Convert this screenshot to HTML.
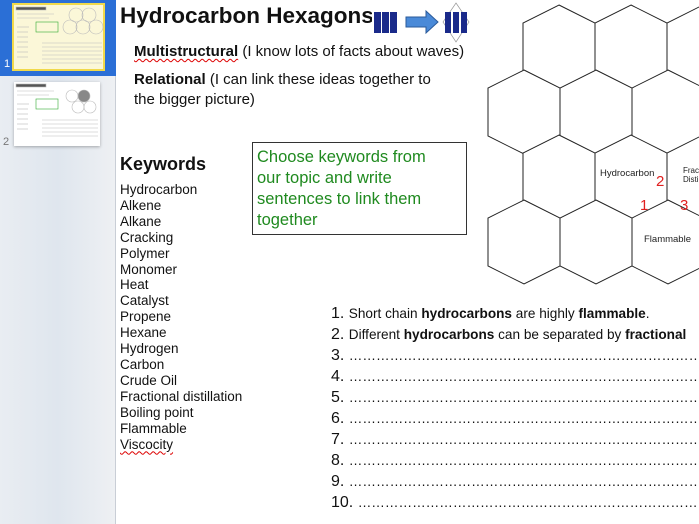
<!DOCTYPE html>
<html><head><meta charset="utf-8"><style>
*{margin:0;padding:0;box-sizing:border-box}
body{width:699px;height:524px;overflow:hidden;position:relative;background:#fff;font-family:"Liberation Sans",sans-serif;color:#111}
.a{position:absolute;white-space:nowrap}
#side{position:absolute;left:0;top:0;width:116px;height:524px;background:linear-gradient(90deg,#e9edf2,#dfe6ee 50%,#eef0f3);border-right:1px solid #c9ced6}
.kw{font-size:13.5px;line-height:15.9px}
.ln{font-size:13.6px}
.ln b{font-weight:bold}
.num{font-size:16px}
.sq{text-decoration:underline wavy #d00;text-decoration-thickness:1px;text-underline-offset:2px}
</style></head><body>
<div id="side">
  <div style="position:absolute;left:0;top:0;width:116px;height:76px;background:#2b6fd6"></div>
  <div style="position:absolute;left:12px;top:3px;width:93px;height:68px;background:#fbf7d8;border:2px solid #f1d94a"></div>
  <div style="position:absolute;left:14px;top:82px;width:86px;height:64px;background:#fff;box-shadow:0 1px 3px rgba(0,0,0,.3)"></div>
  <div class="a" style="left:4px;top:58px;font-size:11px;color:#fff">1</div>
  <div class="a" style="left:3px;top:136px;font-size:11px;color:#777">2</div>
  <svg style="position:absolute;left:14px;top:5px" width="90" height="65">
   <g stroke="#bbb" stroke-width=".6" fill="none">
    <rect x="2" y="2" width="30" height="3" fill="#555"/>
    <line x1="3" y1="9" x2="40" y2="9"/><line x1="3" y1="13" x2="35" y2="13"/>
    <rect x="22" y="17" width="22" height="10" stroke="#3a3"/>
    <line x1="3" y1="22" x2="15" y2="22"/><line x1="3" y1="27" x2="14" y2="27"/><line x1="3" y1="32" x2="14" y2="32"/><line x1="3" y1="37" x2="14" y2="37"/><line x1="3" y1="42" x2="14" y2="42"/><line x1="3" y1="47" x2="14" y2="47"/><line x1="3" y1="52" x2="14" y2="52"/>
    <line x1="28" y1="38" x2="88" y2="38"/><line x1="28" y1="42" x2="88" y2="42"/><line x1="28" y1="46" x2="88" y2="46"/><line x1="28" y1="50" x2="88" y2="50"/><line x1="28" y1="54" x2="88" y2="54"/><line x1="28" y1="58" x2="88" y2="58"/>
    <circle cx="62" cy="10" r="7"/><circle cx="75" cy="10" r="7"/><circle cx="56" cy="22" r="7"/><circle cx="69" cy="22" r="7"/><circle cx="82" cy="22" r="7"/>
   </g></svg>
  <svg style="position:absolute;left:14px;top:82px" width="86" height="64">
   <g stroke="#bbb" stroke-width=".6" fill="none">
    <rect x="2" y="2" width="30" height="3" fill="#555"/>
    <line x1="3" y1="9" x2="40" y2="9"/><line x1="3" y1="13" x2="35" y2="13"/>
    <rect x="22" y="17" width="22" height="10" stroke="#3a3"/>
    <line x1="3" y1="22" x2="15" y2="22"/><line x1="3" y1="27" x2="14" y2="27"/><line x1="3" y1="32" x2="14" y2="32"/><line x1="3" y1="37" x2="14" y2="37"/><line x1="3" y1="42" x2="14" y2="42"/><line x1="3" y1="47" x2="14" y2="47"/>
    <line x1="28" y1="38" x2="84" y2="38"/><line x1="28" y1="42" x2="84" y2="42"/><line x1="28" y1="46" x2="84" y2="46"/><line x1="28" y1="50" x2="84" y2="50"/><line x1="28" y1="54" x2="84" y2="54"/>
    <circle cx="70" cy="14" r="6" fill="#888"/><circle cx="58" cy="14" r="6"/><circle cx="64" cy="25" r="6"/><circle cx="76" cy="25" r="6"/>
   </g></svg>
</div>

<div class="a" style="left:120px;top:3px;font-size:22.5px;font-weight:bold">Hydrocarbon Hexagons</div>

<svg style="position:absolute;left:0;top:0" width="699" height="524">
 <g fill="#fff" stroke="#222" stroke-width="1">
  <polygon points="559,5 595,23 595,71 559,89 523,71 523,23"/>
  <polygon points="631,5 667,23 667,71 631,89 595,71 595,23"/>
  <polygon points="703,5 739,23 739,71 703,89 667,71 667,23"/>
  <polygon points="524,70 560,88 560,136 524,154 488,136 488,88"/>
  <polygon points="596,70 632,88 632,136 596,154 560,136 560,88"/>
  <polygon points="668,70 704,88 704,136 668,154 632,136 632,88"/>
  <polygon points="559,135 595,153 595,201 559,219 523,201 523,153"/>
  <polygon points="631,135 667,153 667,201 631,219 595,201 595,153"/>
  <polygon points="703,135 739,153 739,201 703,219 667,201 667,153"/>
  <polygon points="524,200 560,218 560,266 524,284 488,266 488,218"/>
  <polygon points="596,200 632,218 632,266 596,284 560,266 560,218"/>
  <polygon points="668,200 704,218 704,266 668,284 632,266 632,218"/>
 </g>
 <g font-family="Liberation Sans" font-size="9.5" fill="#222">
  <text x="600" y="176">Hydrocarbon</text>
  <text x="644" y="242">Flammable</text>
  <text x="683" y="173" font-size="8">Frac</text>
  <text x="683" y="182" font-size="8">Disti</text>
 </g>
 <g font-family="Liberation Sans" font-size="15" fill="#e02020">
  <text x="656" y="186">2</text><text x="640" y="210">1</text><text x="680" y="210">3</text>
 </g>
 <g>
  <rect x="372" y="11" width="30" height="24" fill="#fff"/>
  <rect x="374" y="12" width="7" height="21" fill="#1a2a8a"/><rect x="382" y="12" width="7" height="21" fill="#1a2a8a"/><rect x="390" y="12" width="7" height="21" fill="#1a2a8a"/>
  <path d="M406 17 H426 V11 L438 22 L426 33 V27 H406 Z" fill="#4a8ad8" stroke="#2a5a9a" stroke-width="1"/>
  <path d="M456 3 L469 22 L456 42 L443 22 Z" fill="none" stroke="#999" stroke-width=".7"/>
  <rect x="445" y="12" width="6" height="21" fill="#1a2a8a"/><rect x="453" y="12" width="6" height="21" fill="#1a2a8a"/><rect x="461" y="12" width="6" height="21" fill="#1a2a8a"/>
 </g>
</svg>

<div class="a" style="left:134px;top:43px;font-size:15px"><b class="sq">Multistructural</b> (I know lots of facts about waves)</div>
<div class="a" style="left:134px;top:70px;font-size:15px;line-height:20px"><b>Relational</b> (I can link these ideas together to<br>the bigger picture)</div>

<div class="a" style="left:252px;top:142px;width:215px;height:93px;border:1px solid #333;background:#fff;color:#1f8a1f;font-size:16.5px;line-height:21px;padding:4px 0 0 4px">Choose keywords from<br>our topic and write<br>sentences to link them<br>together</div>

<div class="a" style="left:120px;top:154px;font-size:18px;font-weight:bold">Keywords</div>
<div class="a kw" style="left:120px;top:182px">Hydrocarbon<br>Alkene<br>Alkane<br>Cracking<br>Polymer<br>Monomer<br>Heat<br>Catalyst<br>Propene<br>Hexane<br>Hydrogen<br>Carbon<br>Crude Oil<br>Fractional distillation<br>Boiling point<br>Flammable<br><span class="sq">Viscocity</span></div>

<div class="a" style="left:331px;top:303px;width:368px;height:215px;overflow:hidden;line-height:21px">
<div><span class="num">1.</span> <span class="ln">Short chain <b>hydrocarbons</b> are highly <b>flammable</b>.</span></div>
<div><span class="num">2.</span> <span class="ln">Different <b>hydrocarbons</b> can be separated by <b>fractional</b></span></div>
<div><span class="num">3.</span> <span class="ln">…………………………………………………………………………………</span></div>
<div><span class="num">4.</span> <span class="ln">…………………………………………………………………………………</span></div>
<div><span class="num">5.</span> <span class="ln">…………………………………………………………………………………</span></div>
<div><span class="num">6.</span> <span class="ln">…………………………………………………………………………………</span></div>
<div><span class="num">7.</span> <span class="ln">…………………………………………………………………………………</span></div>
<div><span class="num">8.</span> <span class="ln">…………………………………………………………………………………</span></div>
<div><span class="num">9.</span> <span class="ln">…………………………………………………………………………………</span></div>
<div><span class="num">10.</span> <span class="ln">…………………………………………………………………………………</span></div>
</div>
</body></html>
